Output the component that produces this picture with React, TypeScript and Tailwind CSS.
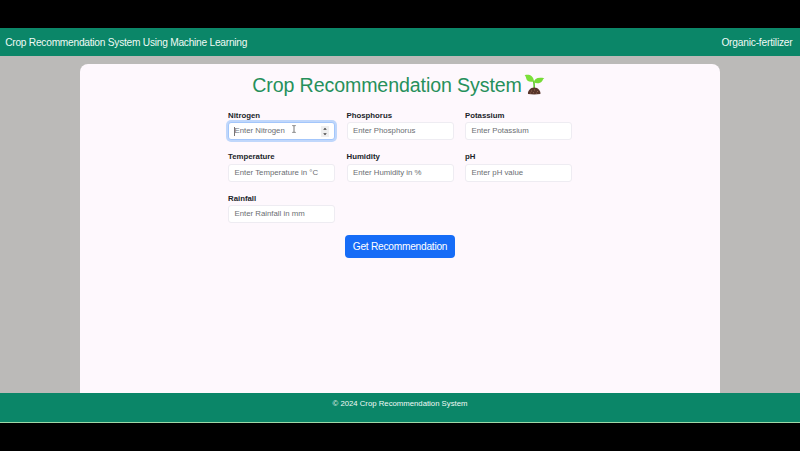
import React from "react";

type FieldProps = { label: string; placeholder: string; active?: boolean };

function Field({ label, placeholder, active = false }: FieldProps) {
  return (
    <div className="flex h-[41.5px] flex-col">
      <label className="h-[10.5px] text-[7.8px] leading-[10px] font-bold whitespace-nowrap text-[#212529]">{label}</label>
      <div
        className={
          active
            ? "relative mt-px flex h-[18px] items-center rounded-[3px] border border-[#a3c6fb] bg-white px-[5.5px] shadow-[0_0_0_2px_#c0d7fb]"
            : "relative mt-px flex h-[18px] items-center rounded-[3px] border border-[#eeecf2] bg-white px-[5.5px]"
        }
      >
        <span className="text-[7.8px] leading-[10px] whitespace-nowrap text-[#6b6e72]">{placeholder}</span>
        {active && (
          <>
            <span className="absolute top-[4px] left-[5px] h-[9px] w-px bg-[#777]" />
            <svg className="absolute top-[2px] left-[62px]" width="6" height="8" viewBox="0 0 5 8" fill="none" stroke="#555" strokeWidth="0.8">
              <path d="M0.8 0.6H2L2.5 1L3 0.6H4.2M2.5 1V7M0.8 7.4H2L2.5 7L3 7.4H4.2" />
            </svg>
            <svg className="absolute top-[3px] right-[5px]" width="8" height="11" viewBox="0 0 8 11">
              <rect width="8" height="11" fill="#efefef" />
              <path d="M2.2 3.8L4 1.7L5.8 3.8ZM2.2 7.2L4 9.3L5.8 7.2Z" fill="#444" />
            </svg>
          </>
        )}
      </div>
    </div>
  );
}

function Seedling() {
  return (
    <svg className="ml-[2px]" width="21" height="21" viewBox="0 0 21 21">
      <path d="M9.3 16C9.5 12.5 9.4 9.4 8.8 7L10.5 6.7C11 9.5 11.1 12.4 11 16Z" fill="#5fc52e" />
      <path d="M0.6 1.2C4.5 0 9.4 1 10 7.4C5.3 8.8 2.5 6.8 2.1 4.1C1.9 2.8 1.5 1.8 0.6 1.2Z" fill="#7be03a" />
      <path d="M10 8.6C10.2 4.4 13.6 3 20.4 4.2C19 4.8 18.9 6 18 7.3C16.1 9.7 12.8 9.8 10 8.6Z" fill="#76dc37" />
      <path d="M4 20C3.5 17.2 6.2 13.6 10.2 13.6C14.2 13.6 16.9 17.2 16.4 20Q10.2 20.8 4 20Z" fill="#59352b" />
      <path d="M7 17h1M10 16h1M13 17.5h1M9 18.7h1M6 19h.8M12 19.2h.8" stroke="#a1745b" strokeWidth="0.8" />
    </svg>
  );
}

const fields: FieldProps[] = [
  { label: "Nitrogen", placeholder: "Enter Nitrogen", active: true },
  { label: "Phosphorus", placeholder: "Enter Phosphorus" },
  { label: "Potassium", placeholder: "Enter Potassium" },
  { label: "Temperature", placeholder: "Enter Temperature in °C" },
  { label: "Humidity", placeholder: "Enter Humidity in %" },
  { label: "pH", placeholder: "Enter pH value" },
  { label: "Rainfall", placeholder: "Enter Rainfall in mm" },
];

export default function App() {
  return (
    <div className="flex h-[451px] w-[800px] flex-col overflow-hidden bg-black pt-[28px] font-['Liberation_Sans',Arial,sans-serif]">
      <nav className="flex h-[28px] shrink-0 items-center justify-between bg-[#0b8668] pt-px pr-[7.5px] pl-[5.2px] text-[10.2px] tracking-[-0.25px] text-[#f0faf6]">
        <span>Crop Recommendation System Using Machine Learning</span>
        <span className="tracking-[-0.2px]">Organic-fertilizer</span>
      </nav>
      <main className="flex h-[337px] shrink-0 justify-center bg-[#bbbab8] pt-[8px]">
        <div className="flex w-[640px] flex-col items-center rounded-t-[8px] bg-[#fef8fd]">
          <h1 className="mt-[8px] mr-[3px] flex h-[25px] items-center text-[19.6px] leading-[25px] tracking-[-0.1px] whitespace-nowrap text-[#26905b]">
            <span className="pt-px">Crop Recommendation System</span>
            <Seedling />
          </h1>
          <form className="mt-[13.5px] grid w-[344px] grid-cols-3 gap-x-[11.5px]">
            {fields.map((f) => (
              <Field key={f.label} {...f} />
            ))}
          </form>
          <button className="flex h-[23px] w-[110px] items-center justify-center rounded-[4px] bg-[#166cf7] text-[10.2px] tracking-[-0.26px] whitespace-nowrap text-white">
            Get Recommendation
          </button>
        </div>
      </main>
      <footer className="flex h-[30px] shrink-0 justify-center border-b border-[#9fd8a8] bg-[#0b8668] pt-[6px] text-[7.75px] leading-[10px] text-[#f0faf6]">
        © 2024 Crop Recommendation System
      </footer>
    </div>
  );
}
